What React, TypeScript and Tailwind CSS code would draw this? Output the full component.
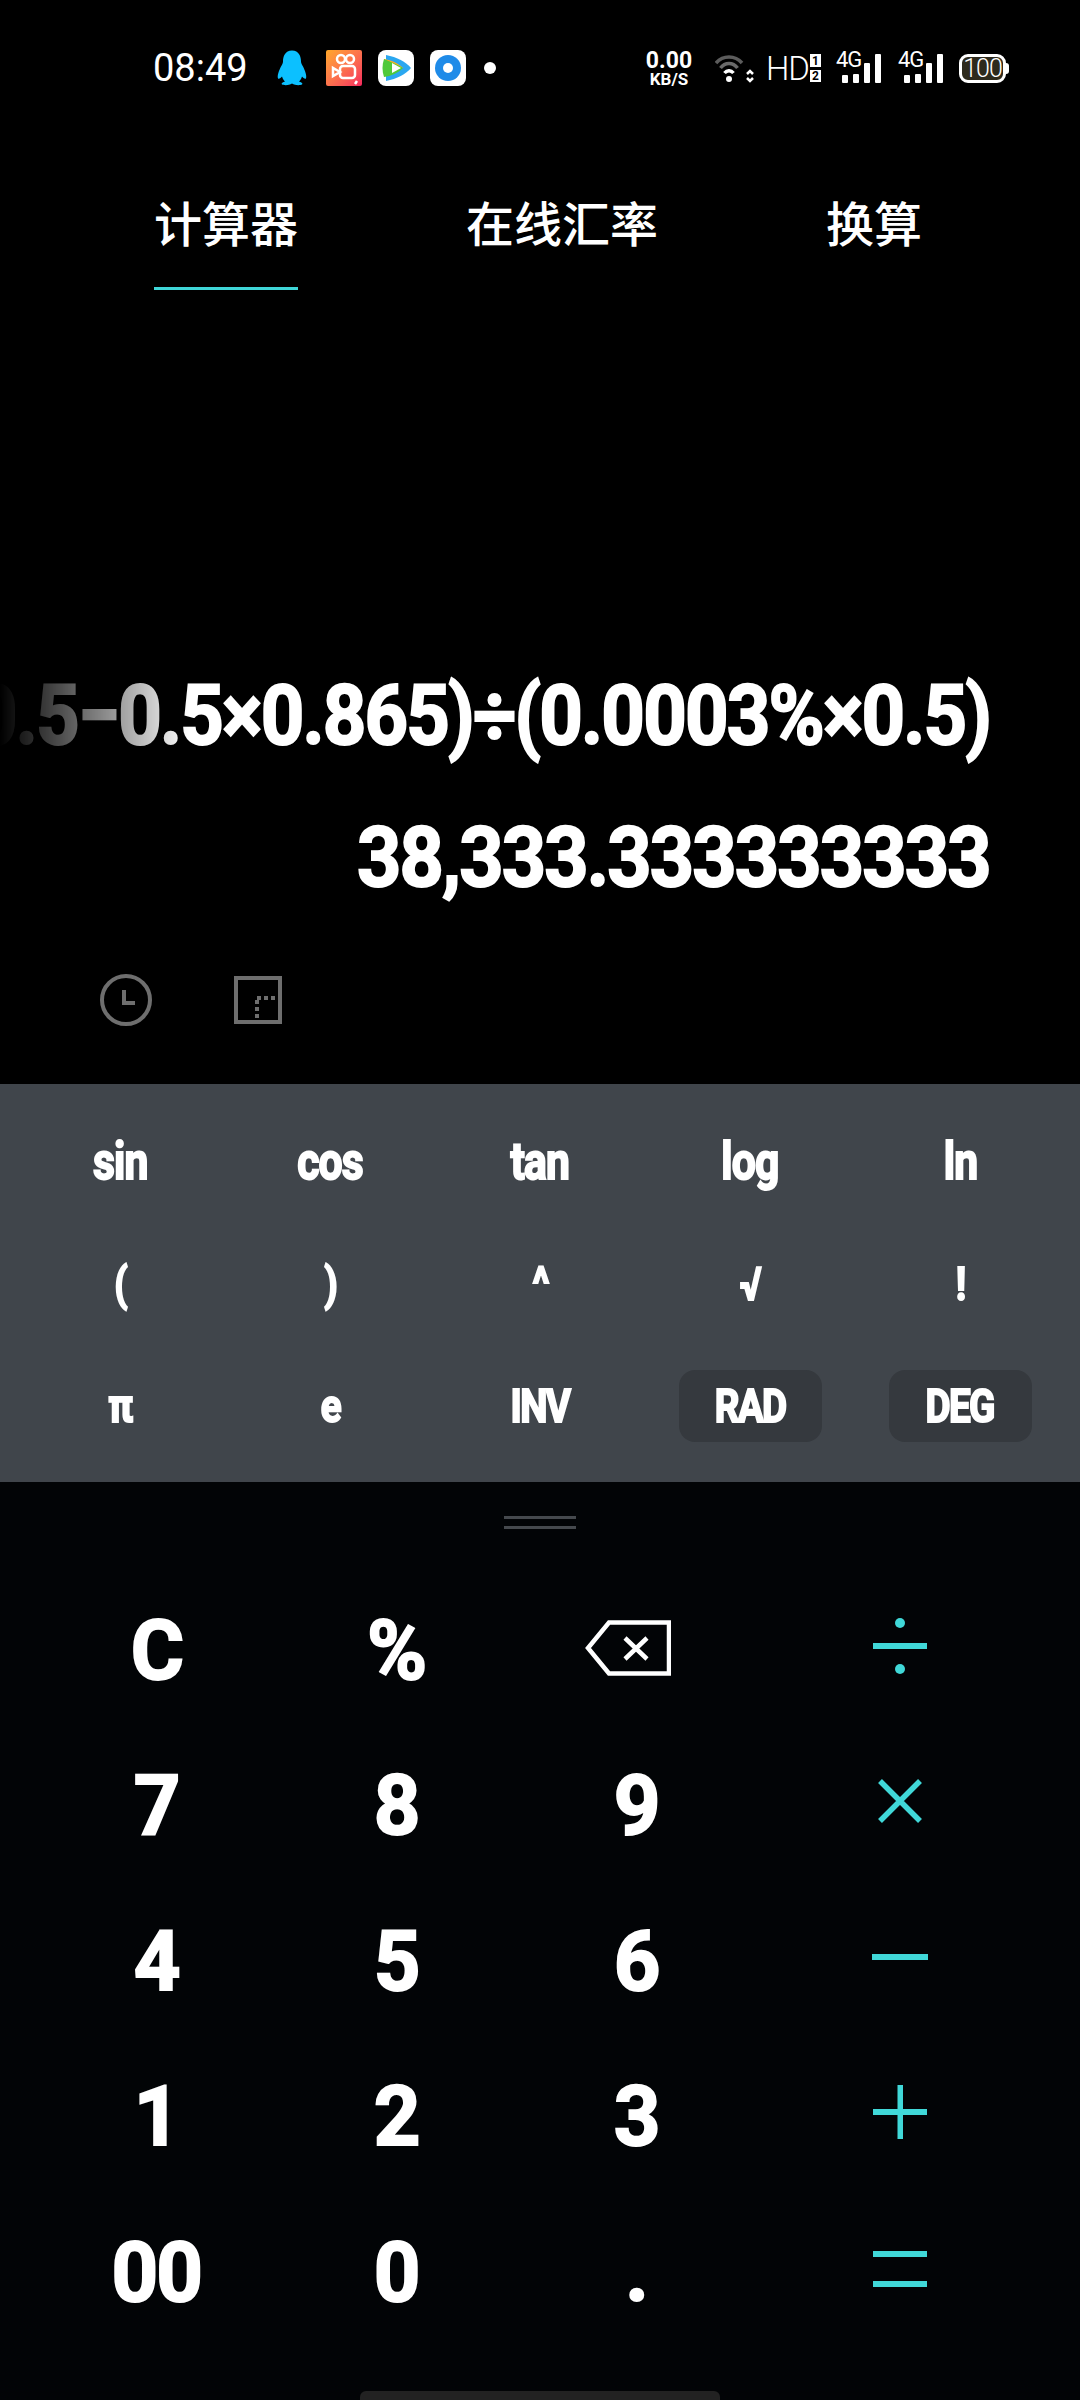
const sciRows = [
  ['sin', 'cos', 'tan', 'log', 'ln'],
  ['(', ')', '^', '√', '!'],
  ['π', 'e', 'INV', 'RAD', 'DEG'],
];

const keyRows = [
  ['C', '%', 'back', 'div'],
  ['7', '8', '9', 'mul'],
  ['4', '5', '6', 'sub'],
  ['1', '2', '3', 'add'],
  ['00', '0', '.', 'eq'],
];

const bigText =
  "font-['Roboto',sans-serif] font-bold text-white text-[84px] leading-none [-webkit-text-stroke:2px_white]";

function Penguin() {
  return (
    <svg width="30" height="36" viewBox="0 0 30 35" className="ml-[30px] shrink-0">
      <path
        fill="#0cc0ff"
        d="M15 0C8 0 6 6 6 11C6 13 5 14 4 16C2 20 0 25 1 28C2 29 4 27 5 26C6 29 7 30 8 31C5 32 4 33 5 34C7 35 12 35 15 33C18 35 23 35 25 34C26 33 25 32 22 31C23 30 24 29 25 26C26 27 28 29 29 28C30 25 28 20 26 16C25 14 24 13 24 11C24 6 22 0 15 0Z"
      />
    </svg>
  );
}

function Kuaishou() {
  return (
    <div className="ml-[19px] h-9 w-9 shrink-0 rounded-[2px] bg-gradient-to-br from-[#ffa726] to-[#f5245c]">
      <svg width="36" height="36" viewBox="0 0 36 36" fill="none" stroke="white" strokeWidth="2.5">
        <circle cx="15" cy="9" r="4" />
        <circle cx="24" cy="9" r="4" />
        <rect x="14" y="16" width="15" height="12" rx="3" />
        <path d="M14 22L7 18V26Z" />
        <path d="M31 31L29 34" />
      </svg>
    </div>
  );
}

function TencentVideo() {
  return (
    <div className="ml-[16px] flex h-9 w-9 shrink-0 items-center justify-center rounded-lg bg-white">
      <svg width="30" height="30" viewBox="0 0 30 30">
        <path fill="#2aa7f0" d="M5 2C16 4 25 9 30 15C25 21 16 26 5 28Z" />
        <path fill="#ffb020" d="M3 6C10 7 17 10 22 15L3 15Z" />
        <path fill="#4fc93a" d="M3 6C1 12 1 18 3 24C10 23 17 20 22 15C17 12 10 9 3 6Z" />
        <path fill="white" d="M11 10L20 15L11 20Z" />
      </svg>
    </div>
  );
}

function BlueDisc() {
  return (
    <div className="ml-[16px] flex h-9 w-9 shrink-0 items-center justify-center rounded-lg bg-white">
      <div className="flex h-[26px] w-[26px] items-center justify-center rounded-full bg-[#1f8be8]">
        <div className="h-2.5 w-2.5 rounded-full bg-white" />
      </div>
    </div>
  );
}

function Wifi() {
  return (
    <svg width="40" height="30" viewBox="0 0 40 30" fill="none" className="ml-[20px] shrink-0">
      <path d="M1 10C8 2 20 2 27 10" stroke="#5c5c5c" strokeWidth="3.5" />
      <path d="M5.5 15C10 9 18 9 22.5 15" stroke="#6a6a6a" strokeWidth="3.5" />
      <path d="M9.5 20C12 17 16 17 18.500 20" stroke="white" strokeWidth="3.5" />
      <circle cx="14" cy="26" r="3" fill="white" />
      <path d="M32 21L35 18L38 21M32 25L35 28L38 25" stroke="white" strokeWidth="2.5" />
    </svg>
  );
}

function Signal() {
  return (
    <div className="relative h-[30px] w-[46px] shrink-0">
      <span className="absolute left-0 top-[-4px] font-['Roboto',sans-serif] text-[22px] leading-[22px] tracking-[-1px] text-white">
        4G
      </span>
      <div className="absolute bottom-0 left-[6px] flex items-end gap-[5px]">
        <div className="h-[8px] w-[6px] rounded-[1px] bg-white" />
        <div className="h-[9px] w-[6px] rounded-[1px] bg-white" />
        <div className="h-[20px] w-[6px] rounded-[1px] bg-white" />
        <div className="h-[29px] w-[6px] rounded-[1px] bg-white" />
      </div>
    </div>
  );
}

function StatusBar() {
  return (
    <div className="flex h-[136px] items-center pl-[153px] text-white">
      <span className="w-[94px] font-['Roboto',sans-serif] text-[38px] leading-none">08:49</span>
      <Penguin />
      <Kuaishou />
      <TencentVideo />
      <BlueDisc />
      <div className="ml-[18px] h-3 w-3 shrink-0 rounded-full bg-white" />
      <div className="ml-[147px] flex w-[52px] flex-col items-center font-['Roboto',sans-serif] font-bold">
        <span className="text-[23px] leading-[21px]">0.00</span>
        <span className="text-[17px] leading-[16px]">KB/S</span>
      </div>
      <Wifi />
      <span className="ml-[11px] font-['Roboto',sans-serif] text-[33px] font-light leading-none tracking-[-1px]">HD</span>
      <div className="ml-[1px] flex flex-col gap-[3px] font-['Roboto',sans-serif] text-[12px] font-bold leading-none text-black">
        <span className="flex h-[13px] w-[11px] items-center justify-center bg-white">1</span>
        <span className="flex h-[12px] w-[11px] items-center justify-center bg-white">2</span>
      </div>
      <div className="ml-[15px]">
        <Signal />
      </div>
      <div className="ml-[16px]">
        <Signal />
      </div>
      <div className="ml-[15px] flex items-center">
        <div className="flex h-[29px] w-[47px] items-center justify-center rounded-[9px] border-[3px] border-white bg-[#2e2a1c] font-['Roboto',sans-serif] text-[25px] font-light leading-none tracking-[-1px]">
          100
        </div>
        <div className="h-[11px] w-[3px] rounded-r-sm bg-white" />
      </div>
    </div>
  );
}

function Tabs() {
  return (
    <div className="flex h-[154px] gap-[168px] pl-[154px] pt-[57px] font-['Noto_Sans_CJK_SC',sans-serif] text-[48px] font-medium leading-[56px] text-white">
      <div className="relative h-[97px] w-[144px] text-center">
        计算器
        <div className="absolute bottom-0 left-0 h-[3px] w-full bg-[#3fd6d8]" />
      </div>
      <div className="whitespace-nowrap">在线汇率</div>
      <div className="whitespace-nowrap">换算</div>
    </div>
  );
}

function Display() {
  return (
    <div className="flex h-[794px] flex-col">
      <div className="mt-[378px] flex h-[96px] items-center justify-end overflow-hidden pr-[90px] [mask-image:linear-gradient(to_right,transparent_0px,rgba(0,0,0,0.3)_60px,white_190px)]">
        <span className={`${bigText} origin-right scale-x-[.905] whitespace-nowrap tracking-[-2px]`}>
          (0.5−0.5×0.865)÷(0.0003%×0.5)
        </span>
      </div>
      <div className="mt-[46px] flex h-[96px] items-center justify-end pr-[90px]">
        <span className={`${bigText} origin-right scale-x-[.92] whitespace-nowrap tracking-[-2px]`}>38,333.333333333</span>
      </div>
      <div className="mt-[68px] flex items-center pl-[100px]">
        <svg width="52" height="52" viewBox="0 0 52 52" fill="none" stroke="#6e6e6e" strokeWidth="4">
          <circle cx="26" cy="26" r="24" />
          <path d="M24 16V29H35" />
        </svg>
        <svg width="48" height="48" viewBox="0 0 48 48" fill="none" stroke="#6e6e6e" strokeWidth="4" className="ml-[82px]">
          <rect x="2" y="2" width="44" height="44" />
          <path d="M23 22H46" strokeDasharray="4 3" />
          <path d="M23 24V46" strokeDasharray="4 3" />
        </svg>
      </div>
    </div>
  );
}

function SciPad() {
  return (
    <div className="grid h-[398px] auto-rows-[122px] grid-cols-5 bg-[#40454b] px-[15px] pt-[17px]">
      {sciRows.flat().map((label) => {
        const boxed = label === 'RAD' || label === 'DEG';
        const lower = /^[a-z]{2,}$/.test(label);
        return (
          <div key={label} className="flex items-center justify-center">
            <div
              className={`flex h-[72px] w-[143px] items-center justify-center rounded-2xl ${boxed ? 'bg-[#35393e]' : ''}`}
            >
              <span
                className={`inline-block font-['Roboto',sans-serif] font-bold leading-none text-white [-webkit-text-stroke:2px_white] ${
                  lower ? 'scale-x-[.82] text-[52px] tracking-[-1px]' : 'scale-x-[.84] text-[46px] tracking-[-2px]'
                }`}
              >
                {label}
              </span>
            </div>
          </div>
        );
      })}
    </div>
  );
}

function OpIcon({ name }: { name: string }) {
  if (name === 'back') {
    return (
      <svg width="86" height="56" viewBox="0 0 86 56" fill="none" stroke="white" strokeWidth="4.5" className="mb-[6px] mr-[16px]">
        <path d="M24 2.500H84V53.500H24L3 28Z" />
        <path d="M40 18L62 39M62 18L40 39" />
      </svg>
    );
  }
  if (name === 'div') {
    return (
      <svg width="54" height="56" viewBox="0 0 54 56" fill="#40d8d8" className="mb-[10px]">
        <circle cx="27" cy="5" r="5" />
        <rect x="0" y="25" width="54" height="6" />
        <circle cx="27" cy="51" r="5" />
      </svg>
    );
  }
  if (name === 'mul') {
    return (
      <svg width="46" height="46" viewBox="0 0 46 46" stroke="#40d8d8" strokeWidth="5.500" className="mb-[10px]">
        <path d="M3 3L43 43M43 3L3 43" />
      </svg>
    );
  }
  if (name === 'sub') {
    return <div className="mb-[10px] h-[6px] w-[56px] bg-[#40d8d8]" />;
  }
  if (name === 'add') {
    return (
      <svg width="54" height="54" viewBox="0 0 54 54" fill="#40d8d8" className="mb-[10px]">
        <rect x="0" y="24" width="54" height="6" />
        <rect x="24.500" y="0" width="5.500" height="54" />
      </svg>
    );
  }
  return (
    <div className="mb-[8px] flex flex-col gap-[24px]">
      <div className="h-[6px] w-[54px] bg-[#40d8d8]" />
      <div className="h-[6px] w-[54px] bg-[#40d8d8]" />
    </div>
  );
}

function KeyPad() {
  return (
    <div className="relative flex h-[918px] flex-col bg-[#020406]">
      <div className="flex flex-col items-center gap-[7px] pt-[34px]">
        <div className="h-[3px] w-[72px] bg-[#45494d]" />
        <div className="h-[3px] w-[72px] bg-[#45494d]" />
      </div>
      <div className="mt-[44px] grid auto-rows-[155.5px] grid-cols-[240px_240px_240px_288px] pl-[36px]">
        {keyRows.flat().map((key) => (
          <div key={key} className="flex items-center justify-center">
            {/^[a-z]+$/.test(key) ? (
              <OpIcon name={key} />
            ) : (
              <span className={`${bigText} inline-block scale-x-[.97] tracking-[-2px]`}>{key}</span>
            )}
          </div>
        ))}
      </div>
      <div className="absolute bottom-0 left-[360px] h-[9px] w-[360px] rounded-t-md bg-[#222222]" />
    </div>
  );
}

export default function App() {
  return (
    <div className="flex h-[2400px] w-[1080px] flex-col overflow-hidden bg-black">
      <StatusBar />
      <Tabs />
      <Display />
      <SciPad />
      <KeyPad />
    </div>
  );
}
